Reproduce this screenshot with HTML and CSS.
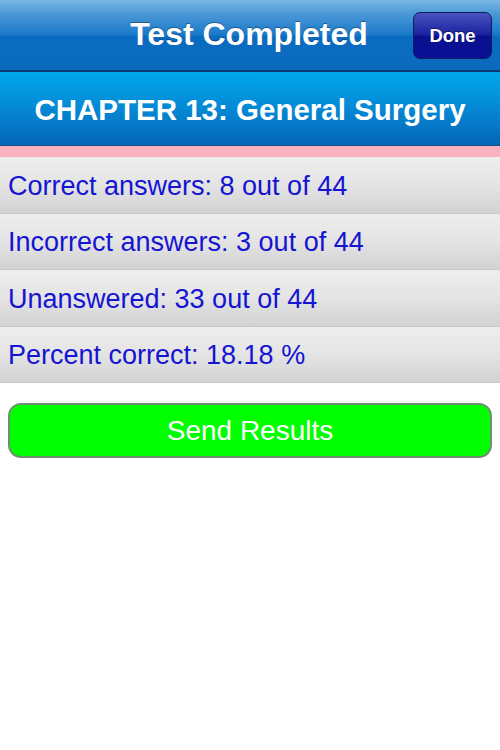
FILE: index.html
```html
<!DOCTYPE html>
<html>
<head>
<meta charset="utf-8">
<link rel="stylesheet" href="styles.css">
</head>
<body>
<div class="navbar">
  <div class="nav-title">Test Completed</div>
  <div class="done-btn">Done</div>
</div>
<div class="chapter">CHAPTER 13: General Surgery</div>
<div class="pink"></div>
<div class="rows">
  <div class="row">Correct answers: 8 out of 44</div>
  <div class="row">Incorrect answers: 3 out of 44</div>
  <div class="row">Unanswered: 33 out of 44</div>
  <div class="row">Percent correct: 18.18 %</div>
</div>
<div class="send-wrap">
  <div class="send-btn">Send Results</div>
</div>
</body>
</html>
```
FILE: styles.css
```css
html, body {
  margin: 0;
  padding: 0;
  background: #ffffff;
  font-family: "Liberation Sans", Arial, sans-serif;
}
.navbar {
  height: 70px;
  position: relative;
  display: flex;
  align-items: center;
  justify-content: center;
  background: linear-gradient(to bottom, #7ab8e4 0%, #4a98d6 20%, #1a78c8 50%, #0a6cc0 52%, #0a6abe 100%);
  border-bottom: 2px solid #0a3a70;
}
.nav-title {
  color: #fff;
  font-weight: bold;
  font-size: 32px;
  margin-left: -2px;
  padding-bottom: 1px;
  text-shadow: 0 -1px 0 rgba(0,0,0,0.35);
}
.done-btn {
  position: absolute;
  right: 8px;
  top: 12px;
  width: 79px;
  height: 47px;
  box-sizing: border-box;
  border: 1px solid #06205a;
  border-radius: 7px;
  background: linear-gradient(to bottom, #4a54c0 0%, #1a22a0 48%, #0a108c 52%, #0a1098 100%);
  color: #fff;
  font-weight: bold;
  font-size: 18.5px;
  display: flex;
  align-items: center;
  justify-content: center;
  text-shadow: 0 -1px 0 rgba(0,0,0,0.4);
}
.chapter {
  height: 74px;
  box-sizing: border-box;
  padding-top: 3px;
  display: flex;
  align-items: center;
  justify-content: center;
  color: #fff;
  font-weight: bold;
  font-size: 29.5px;
  background: linear-gradient(to bottom, #00a8ea 0%, #0588d4 50%, #0566b8 100%);
  border-bottom: 1px solid #1a4a90;
}
.pink {
  height: 11px;
  background: #f9b2c0;
}
.rows {
  display: flex;
  flex-direction: column;
}
.row {
  height: 56.5px;
  box-sizing: border-box;
  display: flex;
  align-items: center;
  padding-left: 8px;
  padding-top: 3px;
  font-size: 27px;
  color: #1414d2;
  background: linear-gradient(to bottom, #eeeeee 0%, #e4e4e4 50%, #d2d2d2 100%);
  border-bottom: 1px solid #c8c8c8;
}
.send-wrap {
  padding: 20px 8px 0 8px;
}
.send-btn {
  height: 55px;
  box-sizing: border-box;
  border: 2px solid #6f8f6f;
  border-radius: 13px;
  background: #00ff00;
  color: #fff;
  font-size: 28px;
  display: flex;
  align-items: center;
  justify-content: center;
}
```
